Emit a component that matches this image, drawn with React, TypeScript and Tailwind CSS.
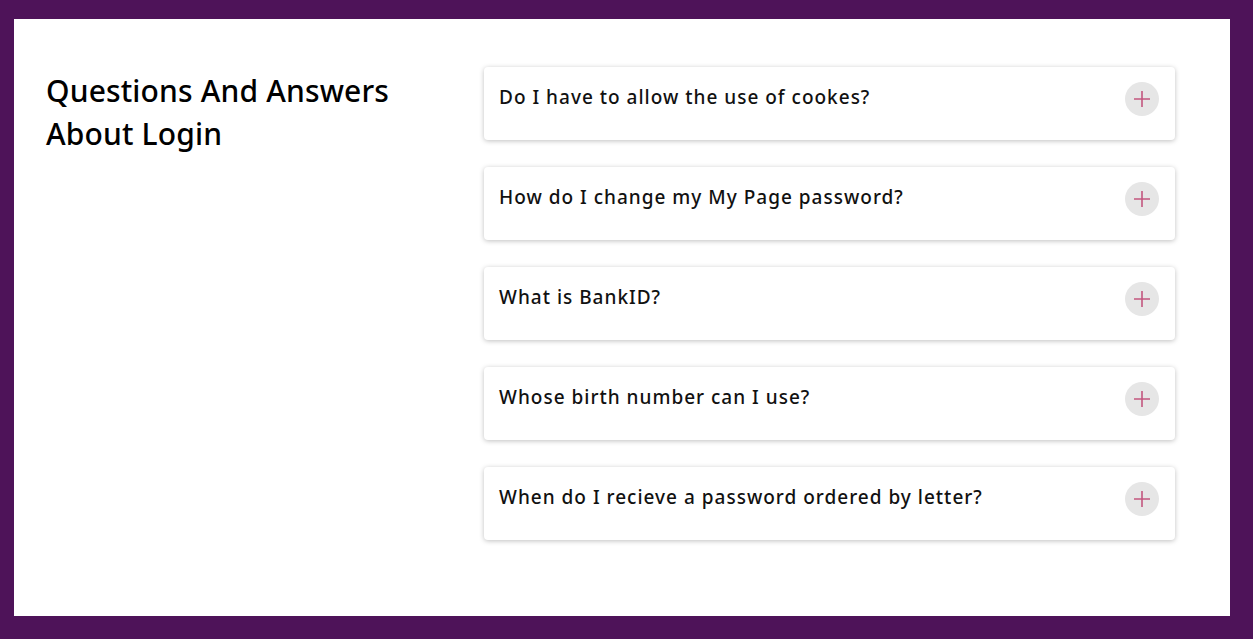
import React from 'react';

const questions = [
  'Do I have to allow the use of cookes?',
  'How do I change my My Page password?',
  'What is BankID?',
  'Whose birth number can I use?',
  'When do I recieve a password ordered by letter?',
];

const PlusIcon = () => (
  <svg width="18" height="18" viewBox="0 0 18 18" fill="none">
    <path d="M9 1v16M1 9h16" stroke="#c4577f" strokeWidth="1.6" />
  </svg>
);

const App: React.FC = () => {
  return (
    <div className="min-h-screen bg-[#4e1359] pt-[19px] pb-[23px] pl-[14px] pr-[23px]">
      <div
        className="bg-white h-[597px] flex pl-8 pt-12"
        style={{ fontFamily: '"Noto Sans", "Open Sans", sans-serif' }}
      >
        {/* Titre */}
        <div className="w-[438px] shrink-0">
          <h1 className="text-[30px] leading-[43px] font-medium text-black mt-[2px] tracking-[0.15px]">
            Questions And Answers
            <br />
            About Login
          </h1>
        </div>

        {/* Liste des questions */}
        <div className="w-[691px] flex flex-col gap-[27px]">
          {questions.map((q) => (
            <div
              key={q}
              className="h-[73px] bg-white rounded-[4px] shadow-[0_1px_5px_rgba(0,0,0,0.25)] flex justify-between items-start pl-[15px] pr-4 pt-[15px]"
            >
              <p className="text-[19px] leading-[30px] font-medium text-[#111] tracking-[1px]">{q}</p>
              <button
                type="button"
                className="w-[34px] h-[34px] rounded-full bg-[#e6e6e6] flex items-center justify-center shrink-0"
              >
                <PlusIcon />
              </button>
            </div>
          ))}
        </div>
      </div>
    </div>
  );
};

export default App;
